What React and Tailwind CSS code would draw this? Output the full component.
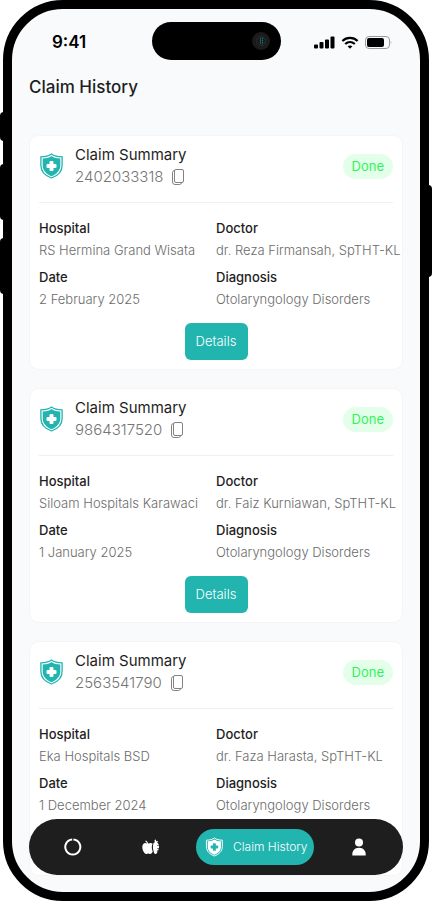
import React from 'react';
import { clsx } from 'clsx';

const claims = [
  {
    id: '2402033318',
    hospital: 'RS Hermina Grand Wisata',
    doctor: 'dr. Reza Firmansah, SpTHT-KL',
    date: '2 February 2025',
    diagnosis: 'Otolaryngology Disorders',
  },
  {
    id: '9864317520',
    hospital: 'Siloam Hospitals Karawaci',
    doctor: 'dr. Faiz Kurniawan, SpTHT-KL',
    date: '1 January 2025',
    diagnosis: 'Otolaryngology Disorders',
  },
  {
    id: '2563541790',
    hospital: 'Eka Hospitals BSD',
    doctor: 'dr. Faza Harasta, SpTHT-KL',
    date: '1 December 2024',
    diagnosis: 'Otolaryngology Disorders',
  },
];

function ShieldIcon({ className, cross }) {
  return (
    <svg viewBox="0 0 24 26" className={className} aria-hidden="true">
      <path d="M12.5 1 C9.5 3.2 6 3.8 1.9 3.9 V12.5 C1.9 18.7 6.8 23 12.5 25 C18.2 23 23.1 18.7 23.1 12.5 V3.9 C19 3.8 15.5 3.2 12.5 1Z" fill="none" stroke="currentColor" strokeWidth="1.3" />
      <path d="M12.5 2.9 C9.9 4.7 7.1 5.3 3.7 5.4 V12.5 C3.7 17.7 7.8 21.4 12.5 23.2 C17.2 21.4 21.3 17.7 21.3 12.5 V5.4 C17.9 5.3 15.1 4.7 12.5 2.9Z" fill="currentColor" />
      <rect x="10.5" y="8" width="4" height="10" rx="1" fill={cross} />
      <rect x="7.5" y="11" width="10" height="4" rx="1" fill={cross} />
    </svg>
  );
}

function CopyIcon() {
  return (
    <svg viewBox="0 0 14 16" className="h-4 w-3.5" fill="none" stroke="currentColor" strokeWidth="0.9" aria-hidden="true">
      <rect x="3.5" y="0.5" width="9" height="13" rx="1.5" />
      <path d="M3.5 1.5 Q1.5 1.8 1.5 3.5 V13 Q1.5 15.5 4 15.5 H8.5 Q10 15.5 10.5 14" />
    </svg>
  );
}

function StatusBar() {
  return (
    <div className="flex h-[66px] shrink-0 items-center justify-between pr-7 pl-10">
      <span className="flex-1 text-[17px] leading-6 font-semibold text-black">9:41</span>
      <div className="mr-3 mb-[3px] flex h-[38px] w-[129px] items-center justify-end rounded-full bg-black pr-[11px]">
        <svg viewBox="0 0 18 18" className="size-[18px]" aria-hidden="true">
          <circle cx="9" cy="9" r="9" fill="#1b1b1b" />
          <circle cx="9" cy="9" r="4.5" fill="none" stroke="#303a3c" strokeDasharray="1.5 1" />
          <path d="M8.5 6v6.5M10.5 5.5v7" stroke="#147a7e" strokeDasharray="1.5 0.7" />
        </svg>
      </div>
      <div className="flex flex-1 items-center justify-end gap-[6px] text-black">
        <svg viewBox="0 0 21 13" className="h-[13px] w-[21px]" fill="currentColor" aria-hidden="true">
          <rect x="0" y="8.5" width="4" height="4" rx="1" />
          <rect x="5.5" y="6" width="4" height="6.5" rx="1" />
          <rect x="11" y="3.5" width="4" height="9" rx="1" />
          <rect x="16.5" y="0.5" width="4" height="12" rx="1" />
        </svg>
        <svg viewBox="0 0 18 13" className="h-[13px] w-[18px]" fill="none" stroke="currentColor" strokeWidth="2.2" aria-hidden="true">
          <path d="M1.4 5 C5.6 0.8 12.4 0.8 16.6 5" />
          <path d="M4.2 8 C7 5.4 11 5.4 13.8 8" />
          <path d="M9 12.7 L6.6 10.3 C8 9.1 10 9.1 11.4 10.3Z" fill="currentColor" stroke="none" />
        </svg>
        <svg viewBox="0 0 27 13" className="h-[13px] w-[27px]" aria-hidden="true">
          <rect x="0.5" y="0.5" width="24" height="12" rx="3.5" fill="none" stroke="#9a9a9a" />
          <rect x="2" y="2" width="17" height="9" rx="2" fill="currentColor" />
          <path d="M25.8 4.6 Q27 6.5 25.8 8.4Z" fill="#9a9a9a" />
        </svg>
      </div>
    </div>
  );
}

function Field({ label, value }) {
  return (
    <div>
      <dt className="text-[13px] leading-5 font-medium text-[#1e1e1e]">{label}</dt>
      <dd className="mt-[2px] text-[13px] leading-5 font-light whitespace-nowrap text-[#6b6b6b]">{value}</dd>
    </div>
  );
}

function ClaimCard({ claim }) {
  return (
    <article className="rounded-[10px] border border-[#f3f5f7] bg-white px-[9px] pt-2 pb-[9px]">
      <header className="flex items-center border-b border-[#efefef] pb-[14px]">
        <ShieldIcon className="h-[26px] w-6 text-[#22b5b0]" cross="#ffffff" />
        <div className="ml-3 grow">
          <h2 className="text-[15px] leading-[22px] text-[#1e1e1e]">Claim Summary</h2>
          <div className="flex items-center gap-2 text-[#757575]">
            <span className="text-[15px] leading-[22px] font-light">{claim.id}</span>
            <button type="button" aria-label="Copy claim number">
              <CopyIcon />
            </button>
          </div>
        </div>
        <span className="rounded-full bg-[#e4ffe9] px-[9px] py-[2px] text-[13px] leading-[21px] text-[#30f35c]">Done</span>
      </header>

      <dl className="mt-[15px] grid grid-cols-2 gap-y-[7px]">
        <Field label="Hospital" value={claim.hospital} />
        <Field label="Doctor" value={claim.doctor} />
        <Field label="Date" value={claim.date} />
        <Field label="Diagnosis" value={claim.diagnosis} />
      </dl>

      <div className="mt-[14px] flex justify-center">
        <button type="button" className="h-[37px] w-[63px] rounded-md bg-[#22b5b0] text-[13px] font-light text-white">
          Details
        </button>
      </div>
    </article>
  );
}

function BottomNav() {
  const item = 'flex h-9 items-center justify-center';
  return (
    <nav className="absolute inset-x-[17px] bottom-[17px] flex h-14 items-center rounded-full bg-[#1e1e1e] px-[5px] text-white">
      <button type="button" aria-label="Home" className={clsx(item, 'flex-1')}>
        <svg viewBox="0 0 18 18" className="size-[18px]" fill="none" stroke="currentColor" strokeWidth="2" aria-hidden="true">
          <path d="M9.4 1.5 A7.5 7.5 0 1 1 8.2 1.5" />
        </svg>
      </button>
      <button type="button" aria-label="Nutrition" className={clsx(item, 'flex-1')}>
        <svg viewBox="0 0 18 16" className="h-4 w-[18px]" fill="currentColor" aria-hidden="true">
          <path d="M5 4.5 C3 3 0.3 4.6 0.3 8 C0.3 11.5 2.5 15 4.5 15 C5.3 15 5.5 14.5 6.3 14.5 C7 14.5 7.3 15 8.2 15 C9.3 15 10.2 13.6 10.7 12.4 C9.5 9.5 9.5 7 10.6 4.8 C9.4 3.5 7.5 3.7 6.2 4.6 C5.9 3.2 5 2 3.8 1.4 L3.2 2.2 C4.1 2.8 4.7 3.6 5 4.5Z" />
          <path d="M11.6 4 C10.8 6 10.6 9.5 11.8 13 C12.4 15.4 14.4 15.8 15.2 13.6 L15.6 12.2 H14.8 V11.6 H16.2 L16.7 9.6 H15 V9 H17 V7 H15 V6.4 H16.9 C16.6 5 16.2 4.2 15.2 3.8 L16.2 2 L14.3 2.2 L13.8 0.4 L12.5 1 L12.8 3.2Z" />
        </svg>
      </button>
      <button type="button" aria-current="page" className="mx-[6px] flex h-9 w-[118px] items-center gap-[10px] rounded-full bg-[#22b5b0] pl-[9px]">
        <ShieldIcon className="h-5 w-[18px] shrink-0 text-white" cross="#22b5b0" />
        <span className="text-[12px] font-light whitespace-nowrap">Claim History</span>
      </button>
      <button type="button" aria-label="Profile" className={clsx(item, 'flex-1')}>
        <svg viewBox="0 0 18 18" className="size-[18px]" fill="currentColor" aria-hidden="true">
          <circle cx="9" cy="4.5" r="4" />
          <path d="M2.3 17.5 C2 13 4.5 9.8 9 9.8 C13.5 9.8 16 13 15.7 17.5Z" />
        </svg>
      </button>
    </nav>
  );
}

export default function App() {
  return (
    <div className="relative h-screen bg-white px-[3px] font-[Inter,'Liberation_Sans',sans-serif]">
      <span className="absolute top-[112px] left-0 h-[29px] w-2 rounded-l-sm bg-black" />
      <span className="absolute top-[164px] left-0 h-[56px] w-2 rounded-l-sm bg-black" />
      <span className="absolute top-[238px] left-0 h-[56px] w-2 rounded-l-sm bg-black" />
      <span className="absolute top-[185px] right-0 h-[92px] w-2 rounded-r-sm bg-black" />

      <div className="relative flex h-full flex-col overflow-hidden rounded-[60px] border-9 border-black bg-[#f8fafc]">
        <StatusBar />
        <h1 className="shrink-0 px-[17px] text-[17px] leading-6 font-medium text-[#1e1e1e]">Claim History</h1>
        <main className="mt-9 flex min-h-0 grow flex-col gap-[18px] overflow-hidden px-[17px]">
          {claims.map((claim) => (
            <ClaimCard key={claim.id} claim={claim} />
          ))}
        </main>
        <BottomNav />
      </div>
    </div>
  );
}
